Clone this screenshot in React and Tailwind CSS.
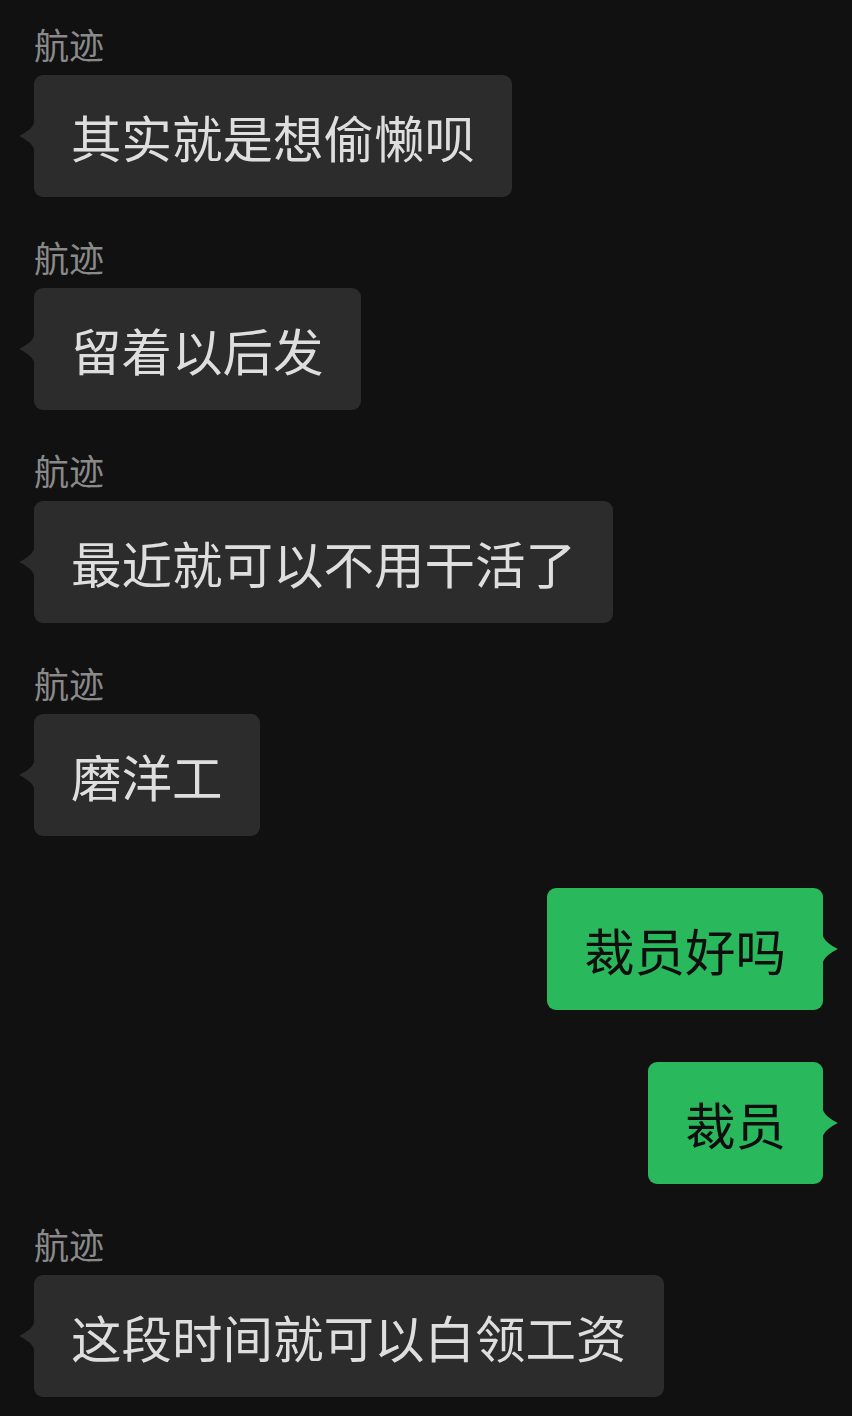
const messages = [
    { from: "them", name: "航迹", text: "其实就是想偷懒呗" },
    { from: "them", name: "航迹", text: "留着以后发" },
    { from: "them", name: "航迹", text: "最近就可以不用干活了" },
    { from: "them", name: "航迹", text: "磨洋工" },
    { from: "me", text: "裁员好吗" },
    { from: "me", text: "裁员" },
    { from: "them", name: "航迹", text: "这段时间就可以白领工资" },
];

function Tail({ side, color }) {
    // small rounded pointer on the side of the bubble
    const d =
        side === "left"
            ? "M17 0 C17 9 12 13 3 18 Q0 19 3 20 C12 25 17 29 17 38 Z"
            : "M0 0 C0 9 5 13 14 18 Q17 19 14 20 C5 25 0 29 0 38 Z";
    return (
        <svg
            width="17"
            height="38"
            viewBox="0 0 17 38"
            className={
                "absolute top-1/2 -translate-y-1/2 " +
                (side === "left" ? "left-[-16px]" : "right-[-16px]")
            }
        >
            <path d={d} fill={color} />
        </svg>
    );
}

function TheirMessage({ name, text, first }) {
    return (
        <div className={"flex flex-col items-start " + (first ? "" : "mt-[42px]")}>
            <div className="text-[35px] leading-[35px] text-[#8a8a8a] mb-[14px]">{name}</div>
            <div className="relative h-[122px] flex items-center px-[37px] rounded-[9px] bg-[#2c2c2c] text-[50.5px] leading-none text-[#dedede]">
                <Tail side="left" color="#2c2c2c" />
                {text}
            </div>
        </div>
    );
}

function MyMessage({ text }) {
    return (
        <div className="flex justify-end mt-[52px]">
            <div className="relative h-[122px] flex items-center px-[37px] rounded-[9px] bg-[#2ab85d] text-[50.5px] leading-none text-[#0e0e0e]">
                <Tail side="right" color="#2ab85d" />
                {text}
            </div>
        </div>
    );
}

export default function App() {
    return (
        <div
            className="min-h-screen bg-[#111111] pl-[34px] pr-[29px] pt-[26px] flex flex-col"
            style={{ fontFamily: '"Noto Sans CJK SC", "Noto Sans", sans-serif' }}
        >
            {messages.map((m, i) =>
                m.from === "them" ? (
                    <TheirMessage key={i} name={m.name} text={m.text} first={i === 0} />
                ) : (
                    <MyMessage key={i} text={m.text} />
                )
            )}
        </div>
    );
}
